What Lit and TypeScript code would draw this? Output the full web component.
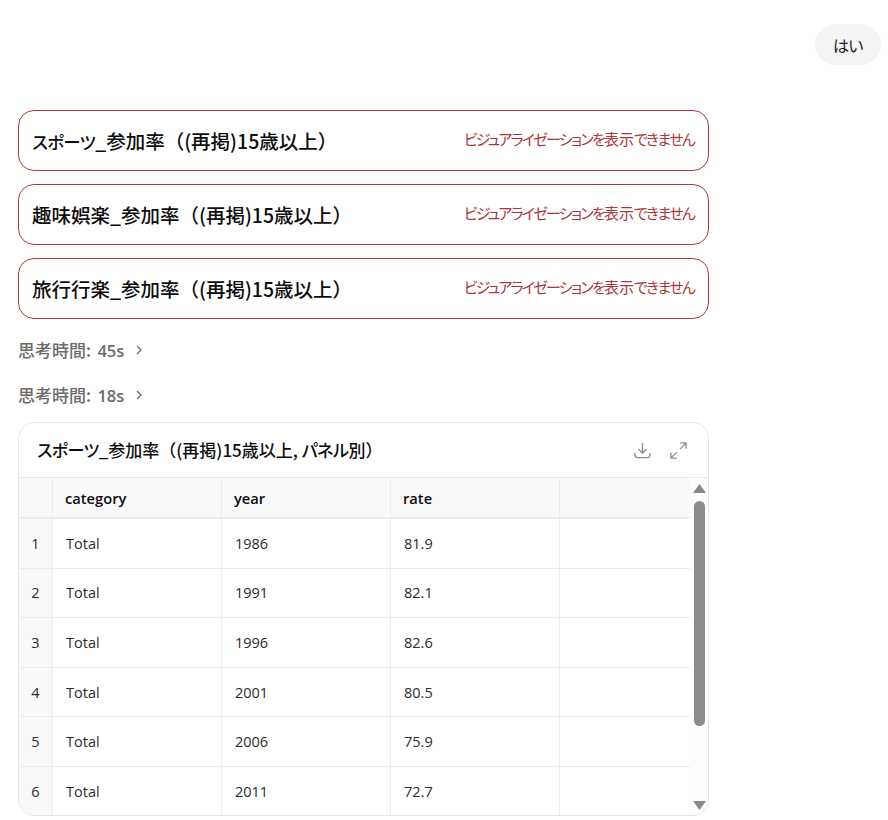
import { LitElement, html, css } from "lit";
import { customElement } from "lit/decorators.js";

const ERROR_TEXT = "ビジュアライゼーションを表示できません";
const CARDS = [
  "スポーツ_参加率（(再掲)15歳以上）",
  "趣味娯楽_参加率（(再掲)15歳以上）",
  "旅行行楽_参加率（(再掲)15歳以上）",
];
const ROWS = [
  ["1", "Total", "1986", "81.9"],
  ["2", "Total", "1991", "82.1"],
  ["3", "Total", "1996", "82.6"],
  ["4", "Total", "2001", "80.5"],
  ["5", "Total", "2006", "75.9"],
  ["6", "Total", "2011", "72.7"],
];

// the kana in the reference are set tighter than the kanji, so wrap kana runs
function kana(text: string) {
  return text
    .split(/([\u3040-\u30ff]+)/)
    .map((part, i) => (i % 2 ? html`<span class="kana">${part}</span>` : part));
}

@customElement("app-root")
export class AppRoot extends LitElement {
  static styles = css`
    :host {
      display: block;
      width: 888px;
      height: 820px;
      overflow: hidden;
      background: #fff;
      color: #0d0d0d;
      font-family: "Open Sans", "Noto Sans CJK JP", sans-serif;
      font-size: 14px;
    }
    .page {
      display: flex;
      flex-direction: column;
      padding: 24px 7px 0 18px;
    }
    .user-row {
      display: flex;
      justify-content: flex-end;
      margin-bottom: 45px;
    }
    .bubble {
      width: 66px;
      height: 41px;
      box-sizing: border-box;
      display: flex;
      align-items: center;
      justify-content: center;
      border-radius: 21px;
      background: #f4f4f4;
      font-size: 16px;
      letter-spacing: -1px;
      font-family: "Noto Sans CJK JP", sans-serif;
      color: #222;
    }
    .main {
      width: 691px;
      display: flex;
      flex-direction: column;
    }
    .errors {
      display: flex;
      flex-direction: column;
      gap: 13px;
    }
    .error-card {
      height: 61px;
      box-sizing: border-box;
      display: flex;
      align-items: center;
      justify-content: space-between;
      padding: 0 14px 0 13px;
      border: 1px solid #ad3a3c;
      border-radius: 16px;
    }
    .error-title {
      font-family: "Noto Sans CJK JP", sans-serif;
      font-size: 19.5px;
      font-weight: 500;
      margin-top: -1px;
    }
    .kana {
      font-feature-settings: "palt";
      letter-spacing: -0.5px;
    }
    .error-title .kana {
      font-size: 17.5px;
      letter-spacing: -0.6px;
    }
    .error-msg {
      font-family: "Noto Sans CJK JP", sans-serif;
      font-size: 15px;
      color: #a9373a;
      margin-top: -4px;
      white-space: nowrap;
    }
    .error-msg .kana {
      letter-spacing: -1.75px;
    }
    .thinking {
      display: flex;
      align-items: center;
      gap: 9px;
      height: 45px;
      font-size: 16.500px;
      font-weight: 600;
      color: #6b6b6b;
    }
    .thinking .jp {
      font-family: "Noto Sans CJK JP", sans-serif;
      font-size: 17px;
      font-weight: 500;
      margin-right: 2px;
    }
    .thinking-first {
      margin-top: 8px;
    }
    .chevron {
      width: 12px;
      height: 12px;
      fill: none;
      stroke: #6b6b6b;
      stroke-width: 1.2;
    }
    .table-card {
      height: 394px;
      margin-top: 5px;
      box-sizing: border-box;
      position: relative;
      overflow: hidden;
      border: 1px solid #e6e6e6;
      border-radius: 16px;
    }
    .table-head {
      height: 55px;
      box-sizing: border-box;
      display: flex;
      align-items: center;
      justify-content: space-between;
      padding: 0 20px 0 18px;
      border-bottom: 1px solid #e6e6e6;
    }
    .table-title {
      font-family: "Noto Sans CJK JP", sans-serif;
      font-size: 17px;
      font-weight: 500;
      margin-top: -2px;
    }
    .actions {
      display: flex;
      align-items: center;
      gap: 17px;
    }
    .actions svg {
      width: 19px;
      height: 19px;
      fill: none;
      stroke: #8e8e8e;
      stroke-width: 1.4;
      stroke-linecap: round;
      stroke-linejoin: round;
    }
    .grid {
      width: 671px;
      display: grid;
      grid-template-columns: 34px 169px 169px 169px 130px;
      grid-template-rows: 41px;
      grid-auto-rows: 49.6px;
    }
    .cell {
      box-sizing: border-box;
      display: flex;
      align-items: center;
      padding-left: 13px;
      border-right: 1px solid #ececec;
      border-bottom: 1px solid #ececec;
      font-size: 14.5px;
      color: #2b2b2b;
    }
    .cell:nth-child(5n) {
      border-right: none;
    }
    .cell.index {
      justify-content: center;
      padding-left: 0;
      background: #f9f9f9;
    }
    .cell.th {
      background: #f9f9f9;
      border-bottom-width: 2px;
      font-size: 14.7px;
      font-weight: 600;
      color: #0d0d0d;
      padding: 1px 0 0 12px;
    }
    .cell.extra {
      padding: 0;
    }
    .scrollbar {
      position: absolute;
      right: 0;
      top: 55px;
      bottom: 0;
      width: 18px;
      display: flex;
      flex-direction: column;
      align-items: center;
      justify-content: space-between;
      background: #fdfdfd;
      padding: 6px 0 5px;
      box-sizing: border-box;
    }
    .arrow {
      width: 13px;
      height: 9px;
      fill: #8a8a8a;
      flex: none;
    }
    .thumb {
      position: absolute;
      top: 23px;
      left: 4px;
      width: 11px;
      height: 225px;
      border-radius: 6px;
      background: #8c8c8c;
    }
  `;

  render() {
    return html`
      <div class="page">
        <div class="user-row"><div class="bubble">はい</div></div>
        <div class="main">
          <div class="errors">
            ${CARDS.map(
              (c) => html`
                <div class="error-card">
                  <span class="error-title">${kana(c)}</span>
                  <span class="error-msg">${kana(ERROR_TEXT)}</span>
                </div>
              `
            )}
          </div>
          ${this.renderThinking("45s", true)} ${this.renderThinking("18s", false)}
          <div class="table-card">
            <div class="table-head">
              <span class="table-title">${kana("スポーツ_参加率（(再掲)15歳以上, パネル別）")}</span>
              <div class="actions">
                <svg viewBox="0 0 20 20">
                  <path d="M10 2.5v10M6 8.8l4 4 4-4" />
                  <path d="M2 13v1.5c0 1.6 1.2 3 3 3h10c1.800 0 3-1.400 3-3V13" />
                </svg>
                <svg viewBox="0 0 20 20">
                  <path d="M12 8l6-6M12.500 2H18v5.500" />
                  <path d="M8 12l-6 6M2 12.500V18h5.500" />
                </svg>
              </div>
            </div>
            <div class="grid">
              <div class="cell th index"></div>
              <div class="cell th">category</div>
              <div class="cell th">year</div>
              <div class="cell th">rate</div>
              <div class="cell th extra"></div>
              ${ROWS.map(
                (r) => html`
                  <div class="cell index">${r[0]}</div>
                  <div class="cell">${r[1]}</div>
                  <div class="cell">${r[2]}</div>
                  <div class="cell">${r[3]}</div>
                  <div class="cell extra"></div>
                `
              )}
            </div>
            <div class="scrollbar">
              <svg class="arrow" viewBox="0 0 13 9"><path d="M6.500 0L13 9H0z" /></svg>
              <div class="thumb"></div>
              <svg class="arrow" viewBox="0 0 13 9"><path d="M0 0h13L6.500 9z" /></svg>
            </div>
          </div>
        </div>
      </div>
    `;
  }

  renderThinking(time: string, first: boolean) {
    return html`
      <div class="thinking ${first ? "thinking-first" : ""}">
        <span><span class="jp">思考時間:</span> ${time}</span>
        <svg class="chevron" viewBox="0 0 12 12"><path d="M4 2l4 4-4 4" /></svg>
      </div>
    `;
  }
}
